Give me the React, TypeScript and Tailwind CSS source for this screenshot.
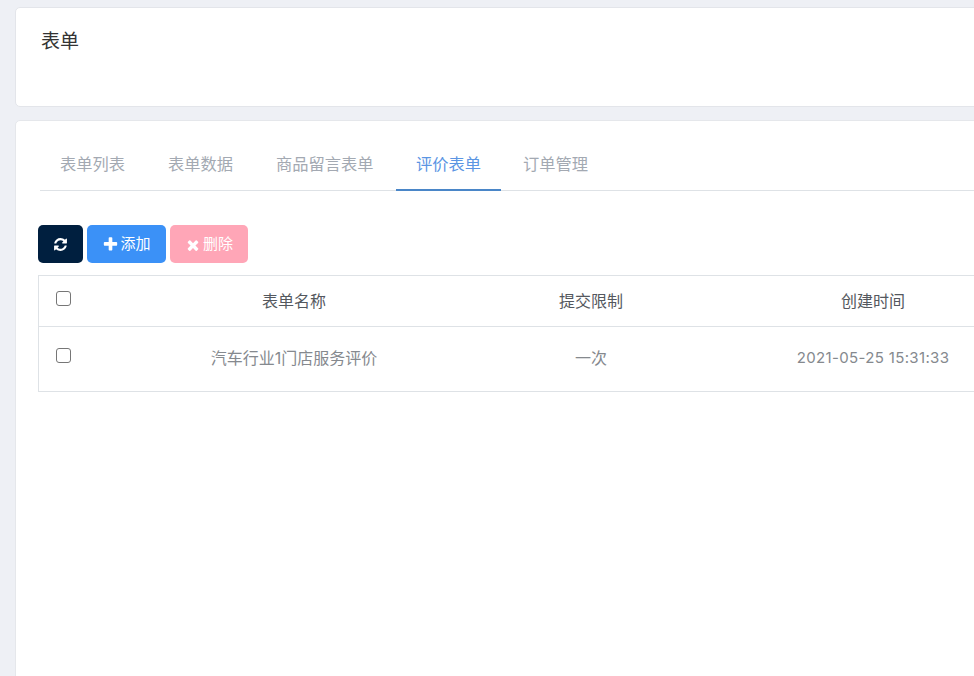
const font = 'font-["Inter","Noto_Sans_CJK_SC",sans-serif]';

const tabs = ['表单列表', '表单数据', '商品留言表单', '评价表单', '订单管理'];

// Font Awesome 4 glyphs, the v5 ones in react-icons are too thin here
function RefreshIcon() {
  return (
    <svg className="w-[15px] h-[15px]" viewBox="0 0 1792 1792" fill="currentColor">
      <path d="M1639 1056q0 5-1 7-64 268-268 434.5t-478 166.5q-146 0-282.5-55t-243.5-157l-129 129q-19 19-45 19t-45-19-19-45v-448q0-26 19-45t45-19h448q26 0 45 19t19 45-19 45l-137 137q71 66 161 102t187 36q134 0 250-65t186-179q11-17 53-117 8-23 30-23h192q13 0 22.5 9.5t9.5 22.5zm25-800v448q0 26-19 45t-45 19h-448q-26 0-45-19t-19-45 19-45l138-138q-148-137-349-137-134 0-250 65t-186 179q-11 17-53 117-8 23-30 23h-199q-13 0-22.5-9.5t-9.5-22.5v-7q65-268 270-434.5t480-166.5q146 0 284 55.5t245 156.5l130-129q19-19 45-19t45 19 19 45z" />
    </svg>
  );
}

function PlusIcon() {
  return (
    <svg className="w-[17px] h-[17px]" viewBox="0 0 1792 1792" fill="currentColor">
      <path d="M1600 736v192q0 40-28 68t-68 28h-416v416q0 40-28 68t-68 28h-192q-40 0-68-28t-28-68v-416h-416q-40 0-68-28t-28-68v-192q0-40 28-68t68-28h416v-416q0-40 28-68t68-28h192q40 0 68 28t28 68v416h416q40 0 68 28t28 68z" />
    </svg>
  );
}

function TimesIcon() {
  return (
    <svg className="w-[16px] h-[16px]" viewBox="0 0 1792 1792" fill="currentColor">
      <path d="M1490 1322q0 40-28 68l-136 136q-28 28-68 28t-68-28l-294-294-294 294q-28 28-68 28t-68-28l-136-136q-28-28-28-68t28-68l294-294-294-294q-28-28-28-68t28-68l136-136q28-28 68-28t68 28l294 294 294-294q28-28 68-28t68 28l136 136q28 28 28 68t-28 68l-294 294 294 294q28 28 28 68z" />
    </svg>
  );
}

function Checkbox() {
  return <span className="block w-[15px] h-[15px] rounded-[3px] border border-[#767676] bg-white" />;
}

export default function App() {
  return (
    <div className={`${font} w-[974px] h-[676px] overflow-hidden bg-[#eef0f5] pl-[15px] pt-[7px]`}>
      <div className="w-[1100px]">
        {/* Page title */}
        <div className="h-[100px] rounded-[5px] bg-white border border-[#e3e5ea] pl-[25px] pt-[21px]">
          <h1 className="text-[19px] leading-[26px] font-normal text-[#333]">表单</h1>
        </div>

        {/* Tabs and table */}
        <div className="mt-[13px] h-[600px] rounded-[5px] bg-white border border-[#e5e7eb] pl-[24px] pt-[20px]">
          <div className="flex h-[50px] border-b border-[#dee2e6]">
            {tabs.map((tab, i) => (
              <div
                key={tab}
                className={
                  i === 3
                    ? 'h-[50px] ml-[1px] mr-[0.5px] px-[20px] pt-[13px] text-[16.25px] leading-[20px] text-[#5b95e3] border-b-2 border-[#4a86c8]'
                    : i === 0
                      ? 'h-[50px] pl-[20px] pr-[21.5px] pt-[13px] text-[16.25px] leading-[20px] text-[#a3a9b2]'
                      : 'h-[50px] px-[21.5px] pt-[13px] text-[16.25px] leading-[20px] text-[#a3a9b2]'
                }
              >
                {tab}
              </div>
            ))}
          </div>

          <div className="flex gap-[4px] mt-[34px] -ml-[2px]">
            <button className="flex items-center justify-center w-[45px] h-[38px] rounded-[5px] bg-[#001f3f] text-white">
              <RefreshIcon />
            </button>
            <button className="flex items-center justify-center gap-[1px] w-[79px] h-[38px] pt-[1px] rounded-[5px] bg-[#3b91f7] text-white text-[15px]">
              <PlusIcon />
              添加
            </button>
            <button className="flex items-center justify-center gap-[2px] w-[78px] h-[38px] pt-[1px] rounded-[5px] bg-[#ffa6b7] text-white text-[15px]">
              <TimesIcon />
              删除
            </button>
          </div>

          <div className="w-[1040px] mt-[12px] -ml-[2px] border border-[#dee2e6] text-[16px]">
            <div className="flex h-[51px] border-b border-[#dee2e6] text-[#54585e]">
              <div className="w-[50px] pl-[17px] pt-[15px]"><Checkbox /></div>
              <div className="w-[410px] flex items-center justify-center">表单名称</div>
              <div className="w-[184px] flex items-center justify-center">提交限制</div>
              <div className="w-[382px] flex items-center justify-center -ml-[1px]">创建时间</div>
            </div>
            <div className="flex h-[64px] pb-[2px] text-[#85898e]">
              <div className="w-[50px] pl-[17px] pt-[21px]"><Checkbox /></div>
              <div className="w-[410px] flex items-center justify-center">汽车行业1门店服务评价</div>
              <div className="w-[184px] flex items-center justify-center">一次</div>
              <div className="w-[382px] flex items-center justify-center -ml-[1px] text-[15px] tracking-[0.35px]">2021-05-25 15:31:33</div>
            </div>
          </div>
        </div>
      </div>
    </div>
  );
}
